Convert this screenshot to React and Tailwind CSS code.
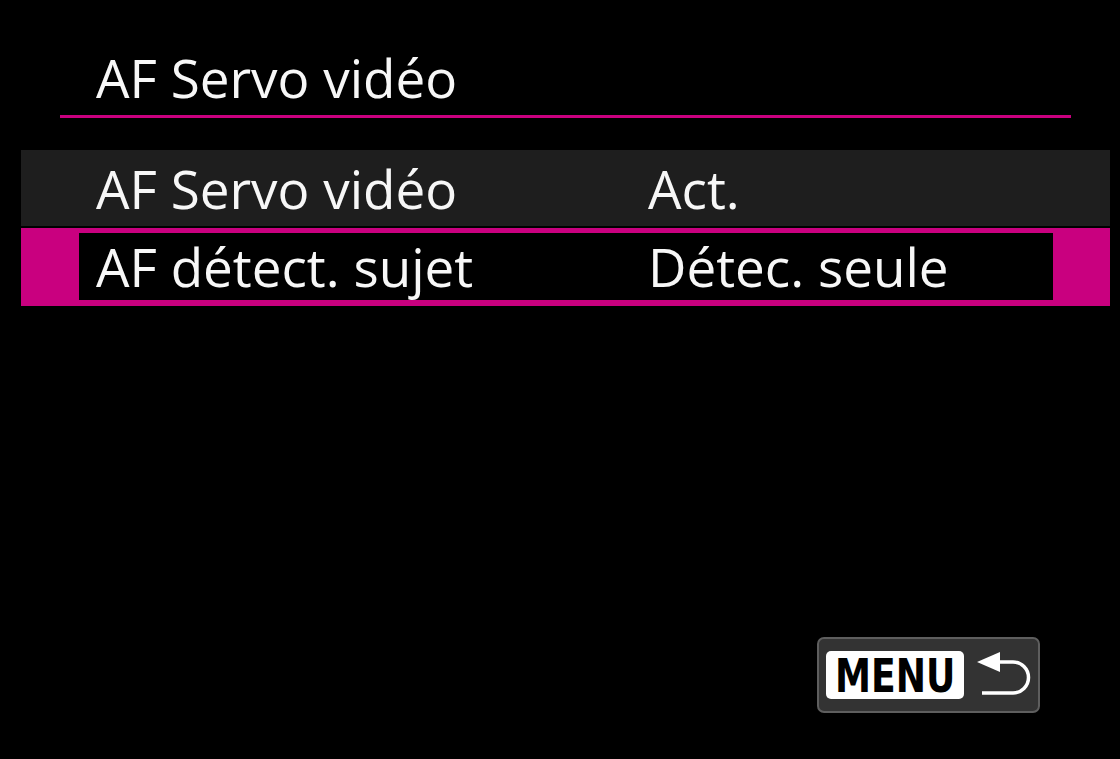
import React from "react";

const font = { fontFamily: '"Open Sans", "Noto Sans", sans-serif' };

export default function App() {
  return (
    <div
      className="w-[1120px] h-[759px] bg-black text-white flex flex-col overflow-hidden"
      style={font}
    >
      <div className="pt-[51px] pl-[96px] text-[53px] leading-[53px] text-[#f7f7f7]">
        AF Servo vidéo
      </div>
      <div className="mt-[11px] ml-[60px] w-[1011px] h-[3px] bg-[#c9007f]" />

      <div className="mt-[32px] ml-[21px] w-[1089px] h-[76px] bg-[#1e1e1e] flex items-center text-[53px] leading-[53px] text-[#f7f7f7]">
        <div className="w-[627px] pl-[75px]">AF Servo vidéo</div>
        <div>Act.</div>
      </div>

      <div className="mt-[2px] ml-[21px] w-[1089px] h-[78px] bg-[#c9007f] pl-[58px] pr-[57px] pt-[5px] pb-[6px] flex">
        <div className="flex-1 bg-black flex items-center text-[53px] leading-[53px] text-[#f7f7f7]">
          <div className="w-[569px] pl-[17px]">AF détect. sujet</div>
          <div>Détec. seule</div>
        </div>
      </div>

      <div className="flex-1" />

      <div className="self-end mr-[80px] mb-[46px] w-[223px] h-[76px] rounded-[7px] border-2 border-[#5e5e5e] bg-[#333333] flex items-center pl-[7px]">
        <div className="w-[138px] h-[48px] shrink-0 rounded-[5px] bg-white flex items-center justify-center">
          <span
            className="inline-block text-black font-bold text-[47px] leading-none scale-x-[0.77] whitespace-nowrap"
            style={{ fontFamily: '"DejaVu Sans", "Liberation Sans", sans-serif' }}
          >
            MENU
          </span>
        </div>
        <svg
          className="ml-[11px] shrink-0"
          width="58"
          height="52"
          viewBox="0 0 58 52"
        >
          <polygon points="2,13 25,3 25,23" fill="white" />
          <path
            d="M24 13 H38 A15.5 15.5 0 0 1 38 44 H7"
            fill="none"
            stroke="white"
            strokeWidth="3.5"
          />
        </svg>
      </div>
    </div>
  );
}
